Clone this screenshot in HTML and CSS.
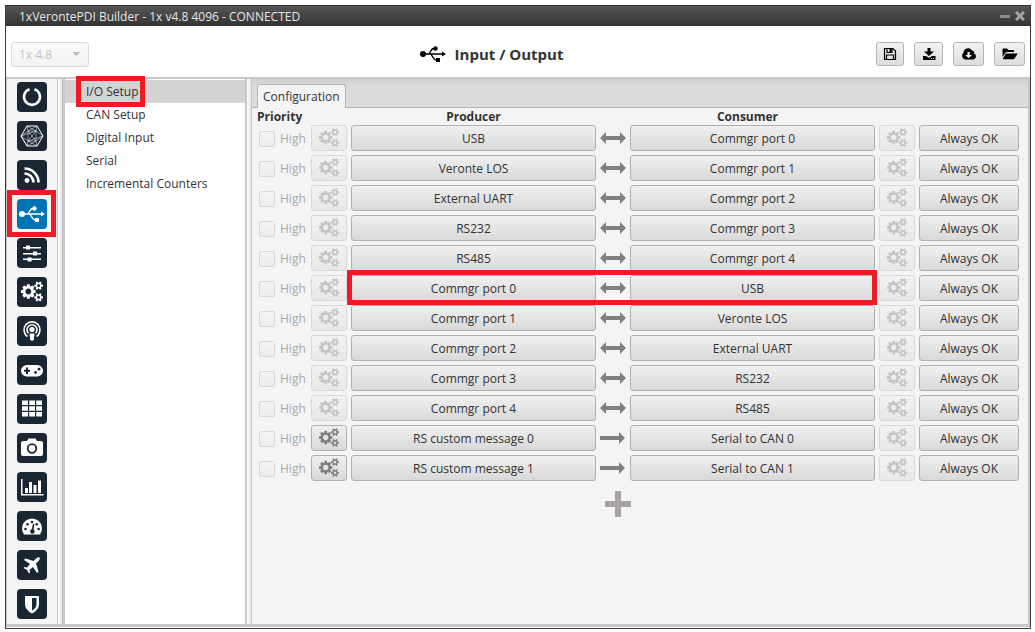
FILE: index.html
```html
<!DOCTYPE html>
<html lang="en">
<head>
  <meta charset="UTF-8" />
  <meta name="viewport" content="width=device-width, initial-scale=1.0"/>
  <title>1xVerontePDI Builder</title>
  <link rel="stylesheet" href="styles.css">
</head>
<body>
  <svg class="symbols" aria-hidden="true">
    <symbol id="usb" viewBox="0 0 26 18">
      <circle cx="3" cy="9" r="3"/>
      <path d="M3 9H23M8 9C11 9 10 3.500 14 3.500H17M10 9C13 9 12 15 17 15" fill="none" stroke="currentColor" stroke-width="1.300"/>
      <circle cx="15.500" cy="3.500" r="2.200"/>
      <path d="M22 6.500L26 9L22 11.500ZM16 13H20V17H16Z"/>
    </symbol>
    <symbol id="gears" viewBox="0 0 1920 1792">
      <path d="M896 896q0-106-75-181t-181-75-181 75-75 181 75 181 181 75 181-75 75-181zm384-91v185q0 10-7 19.500t-16 10.500l-155 24q-11 35-32 76 34 48 90 115 7 11 7 20 0 12-7 19-23 30-82.500 89.500t-78.500 59.500q-11 0-21-7l-115-90q-37 19-77 31-11 108-23 155-7 24-30 24h-186q-11 0-20-7.500t-10-17.500l-23-153q-34-10-75-31l-118 89q-7 7-20 7-11 0-21-8-144-133-144-160 0-9 7-19 10-14 41-53t47-61q-23-44-35-82l-152-24q-10-1-17-9.500t-7-19.500v-185q0-10 7-19.500t16-10.500l155-24q11-35 32-76-34-48-90-115-7-11-7-20 0-12 7-20 22-30 82-89t79-59q11 0 21 7l115 90q34-18 77-32 11-108 23-154 7-24 30-24h186q11 0 20 7.500t10 17.500l23 153q34 10 75 31l118-89q8-7 20-7 11 0 21 8 144 133 144 160 0 8-7 19-12 16-42 54t-45 60q23 48 34 82l152 23q10 2 17 10.500t7 19.500z"/>
      <path id="small-gear" d="M1664 1408q0-52-38-90t-90-38-90 38-38 90q0 53 37.500 90.500t90.500 37.500 90.500-37.500 37.500-90.500zm256-70v140q0 16-149 31-12 27-30 52 51 113 51 138 0 4-4 7-122 71-124 71-8 0-46-47t-52-68q-20 2-30 2t-30-2q-14 21-52 68t-46 47q-2 0-124-71-4-3-4-7 0-25 51-138-18-25-30-52-149-15-149-31v-140q0-16 149-31 13-29 30-52-51-113-51-138 0-4 4-7 4-2 35-20t59-34 30-16q8 0 46 46.500t52 67.500q20-2 30-2t30 2q51-71 92-112l6-2q4 0 124 70 4 3 4 7 0 25-51 138 17 23 30 52 149 15 149 31z"/>
      <use href="#small-gear" y="-1024"/>
    </symbol>
    <symbol id="both" viewBox="0 0 26 12">
      <path d="M0 6L6 0V4H20V0L26 6L20 12V8H6V12Z"/>
    </symbol>
    <symbol id="right" viewBox="0 0 26 12">
      <path d="M0 4H19V0L25 6L19 12V8H0Z"/>
    </symbol>
  </svg>

  <div class="window">
    <div class="titlebar">
      <span>1xVerontePDI Builder - 1x v4.8 4096 - CONNECTED</span>
      <div class="window-buttons">
        <button aria-label="Minimize"><svg width="10" height="10"><path d="M0 4H10V7H0Z"/></svg></button>
        <button aria-label="Close"><svg width="10" height="10"><path d="M1 1L9 9M9 1L1 9" stroke="#a5a5a5" stroke-width="3"/></svg></button>
      </div>
    </div>

    <header>
      <select aria-label="Version" disabled>
        <option>1x 4.8</option>
      </select>
      <h1><svg width="26" height="18"><use href="#usb"/></svg>Input / Output</h1>
      <div class="toolbar">
        <button aria-label="Save"><svg width="14" height="14" viewBox="0 0 14 14"><path d="M1.500 1.500H10L12.500 4V12.500H1.500ZM3.500 12V8H10.500V12M4 2V5.500H9V2" fill="none" stroke="#000" stroke-width="1.200"/><path d="M6.500 2H8.500V5H6.500Z"/></svg></button>
        <button class="mid" aria-label="Download"><svg width="14" height="14" viewBox="0 0 14 14"><path d="M5.500 1H8.500V4.500H12L7 9L2 4.500H5.500Z"/><path d="M1 9H4L7 11L10 9H13.500V13H1Z"/><path d="M9 11H10V12H9ZM11 11H12V12H11Z" fill="#eee"/></svg></button>
        <button class="wide" aria-label="Cloud download"><svg width="16" height="14" viewBox="0 0 16 14"><path d="M4 12.500A3.800 3.800 0 0 1 2.500 5.800A4.600 4.600 0 0 1 11 3.500A2.600 2.600 0 0 1 13.200 6.500A3.200 3.200 0 0 1 12.500 12.500Z"/><path d="M6.500 5H8.700V8H11L7.600 11.300L4.200 8H6.500Z" fill="#eee"/></svg></button>
        <button class="wide" aria-label="Open"><svg width="16" height="14" viewBox="0 0 16 14"><path d="M0.500 10V2.500Q0.500 1.500 1.500 1.500H5L6.500 3H11Q12 3 12 4V5H5.500Q4 5 3.200 6Z"/><path d="M4.500 6.500H15.800L12.500 11.500Q12 12.300 11 12.300H0.700L3.300 7.300Q3.700 6.500 4.500 6.500Z"/></svg></button>
      </div>
    </header>

    <main>
      <nav class="sidebar">
        <button aria-label="Status"><svg viewBox="0 0 30 30"><path d="M12.500 7.300A8 8 0 1 0 17.500 7.300" fill="none" stroke="#fff" stroke-width="2.600"/></svg></button>
        <button aria-label="Mesh"><svg viewBox="0 0 30 30"><g fill="none" stroke="#fff" stroke-width="0.500"><path d="M10 5H20L26 15L20 25H10L4 15Z" stroke-width="1"/><path d="M10 5L11 10L4 15L11 20L10 25M20 5L19 10L26 15L19 20L20 25M11 10L20 5M11 10H19V20H11ZM11 10L19 20M19 10L11 20M4 15L19 10M4 15L10 25L19 20M10 5L19 10M26 15L11 20L20 25"/></g></svg></button>
        <button aria-label="Telemetry"><svg viewBox="0 0 30 30"><circle cx="10" cy="20.500" r="2.400"/><path d="M7.500 13.500A9 9 0 0 1 16.500 22.500M7.500 8.500A14 14 0 0 1 21.500 22.500" fill="none" stroke="#fff" stroke-width="2.600"/></svg></button>
        <button class="active" aria-label="Input / Output"><svg viewBox="0 0 30 30"><use href="#usb" x="2" y="6" width="26" height="18"/></svg></button>
        <button aria-label="Control"><svg viewBox="0 0 30 30"><path d="M6 9H24V10.500H6ZM6 15H24V16.500H6ZM6 20.500H24V22H6ZM9 7.500H13V11.500H9ZM16 13.500H20V17.500H16ZM10.500 19.500H14.500V23.500H10.500Z"/></svg></button>
        <button aria-label="Automations"><svg viewBox="0 0 30 30"><use href="#gears" x="4" y="4" width="22" height="21"/></svg></button>
        <button aria-label="Communications"><svg viewBox="0 0 30 30"><g fill="none" stroke="#fff" stroke-width="1.600"><path d="M10.500 20.500A8 8 0 1 1 19.500 20.500"/><path d="M11.500 17.300A5 5 0 1 1 18.500 17.300"/></g><circle cx="15" cy="13.500" r="2.600"/><path d="M12.500 17.500H17.500L16.800 24Q15 25.500 13.200 24Z"/></svg></button>
        <button aria-label="Stick"><svg viewBox="0 0 30 30"><rect x="4" y="10" width="22" height="11.500" rx="5.750"/><path d="M9 12.500H11V14.700H13V16.700H11V19H9V16.700H7V14.700H9Z" fill="#1a2733"/><circle cx="18.500" cy="17.500" r="1.400" fill="#1a2733"/><circle cx="22" cy="14.200" r="1.400" fill="#1a2733"/></svg></button>
        <button aria-label="Variables"><svg viewBox="0 0 30 30"><path d="M5 6.500H11V11H5ZM12.200 6.500H18V11H12.200ZM19.200 6.500H25V11H19.200ZM5 12.300H11V16.700H5ZM12.200 12.300H18V16.700H12.200ZM19.200 12.300H25V16.700H19.200ZM5 18H11V22.500H5ZM12.200 18H18V22.500H12.200ZM19.200 18H25V22.500H19.200Z"/></svg></button>
        <button aria-label="Camera"><svg viewBox="0 0 30 30"><path d="M6 8H10L11.500 5.500H18.500L20 8H24Q26 8 26 10V21Q26 23 24 23H6Q4 23 4 21V10Q4 8 6 8Z"/><circle cx="15" cy="15.500" r="4.300" fill="none" stroke="#1a2733" stroke-width="1.800"/></svg></button>
        <button aria-label="Charts"><svg viewBox="0 0 30 30"><path d="M4 7H5.500V22H26.500V23.500H4ZM8 16H11V21H8ZM12 10H15V21H12ZM16.500 13H19.500V21H16.500ZM21 8.500H24V21H21Z"/></svg></button>
        <button aria-label="Gauges"><svg viewBox="0 0 30 30"><path d="M7 23.500A10 10 0 1 1 23 23.500Z"/><g fill="#1a2733"><circle cx="8.500" cy="18" r="1.300"/><circle cx="10.500" cy="13.300" r="1.300"/><circle cx="15" cy="11" r="1.300"/><circle cx="19.700" cy="13.300" r="1.300"/><circle cx="21.600" cy="18" r="1.300"/><path d="M16 12.800L17.300 13L16.600 18.500A2.300 2.300 0 1 1 14.700 18.300Z"/></g></svg></button>
        <button aria-label="Aircraft"><svg viewBox="0 0 30 30"><path d="M22.500 7.500Q21 6.500 18.500 9L16.500 11L8.500 8.500L7 10L13 14L10 17.500L7.500 17L6.500 18L10 20L12 23.500L13 22.500L12.500 20L16 17L20 23L21.500 21.500L19 13.500L21 11.500Q23.500 9 22.500 7.500Z"/></svg></button>
        <button aria-label="Safety"><svg viewBox="0 0 30 30"><path fill-rule="evenodd" d="M8 7H22V15Q22 21 15 24.500Q8 21 8 15ZM15 9V21.500Q19.500 19 19.500 15V9Z"/></svg></button>
      </nav>

      <div class="divider"></div>

      <ul class="menu">
        <li class="selected"><a href="#">I/O Setup</a></li>
        <li><a href="#">CAN Setup</a></li>
        <li><a href="#">Digital Input</a></li>
        <li><a href="#">Serial</a></li>
        <li><a href="#">Incremental Counters</a></li>
      </ul>

      <div class="divider"></div>

      <section class="content">
        <div class="tabs">
          <button class="tab">Configuration</button>
        </div>
        <div class="panel">
          <table>
            <colgroup>
              <col class="col-priority"><col class="col-gear"><col><col class="col-arrow"><col><col class="col-gear"><col class="col-status">
            </colgroup>
            <thead>
              <tr>
                <th class="priority">Priority</th>
                <th></th>
                <th>Producer</th>
                <th></th>
                <th class="consumer">Consumer</th>
                <th></th>
                <th></th>
              </tr>
            </thead>
            <tbody id="rows"></tbody>
          </table>
          <button class="add" aria-label="Add"><svg width="26" height="26"><path d="M10 0H16V10H26V16H16V26H10V16H0V10H10Z"/></svg></button>
        </div>
      </section>
    </main>
  </div>

  <script>
    const connections = [
      ["USB", "Commgr port 0"],
      ["Veronte LOS", "Commgr port 1"],
      ["External UART", "Commgr port 2"],
      ["RS232", "Commgr port 3"],
      ["RS485", "Commgr port 4"],
      ["Commgr port 0", "USB"],
      ["Commgr port 1", "Veronte LOS"],
      ["Commgr port 2", "External UART"],
      ["Commgr port 3", "RS232"],
      ["Commgr port 4", "RS485"],
      ["RS custom message 0", "Serial to CAN 0"],
      ["RS custom message 1", "Serial to CAN 1"]
    ];
    const highlighted = 5;
    const gears = `<svg width="20" height="19"><use href="#gears"/></svg>`;

    const tbody = document.getElementById("rows");
    connections.forEach(([producer, consumer], i) => {
      const custom = producer.startsWith("RS custom");
      const tr = document.createElement("tr");
      tr.innerHTML = `
        <td><label><input type="checkbox" disabled>High</label></td>
        <td><button class="gear" aria-label="Producer settings" ${custom ? "" : "disabled"}>${gears}</button></td>
        <td><button>${producer}</button></td>
        <td><svg class="arrow" width="26" height="12"><use href="#${custom ? "right" : "both"}"/></svg></td>
        <td><button>${consumer}</button></td>
        <td><button class="gear" aria-label="Consumer settings" disabled>${gears}</button></td>
        <td><button>Always OK</button>${i === highlighted ? '<span class="highlight"></span>' : ""}</td>
      `;
      tbody.appendChild(tr);
    });
  </script>
</body>
</html>
```
FILE: styles.css
```css
* {
  margin: 0;
  padding: 0;
  box-sizing: border-box;
}

body {
  font-family: "Open Sans", "Noto Sans", sans-serif;
  font-size: 12px;
  color: #333;
  background-color: #fff;
  height: 100vh;
  padding: 5px 4px 3px 5px;
}

button, select {
  font: inherit;
  color: inherit;
}

.symbols {
  position: absolute;
  width: 0;
  height: 0;
}

.window {
  height: 100%;
  display: flex;
  flex-direction: column;
  border: 1px solid #3c3c3c;
  border-top: none;
}

/* Title bar */
.titlebar {
  height: 21px;
  padding: 0 5px 0 13px;
  display: flex;
  justify-content: space-between;
  align-items: center;
  color: #e6e6e6;
  background: linear-gradient(#555, #333);
  border-top: 1px solid #333;
}

.window-buttons {
  display: flex;
  gap: 5px;
}

.window-buttons button {
  display: flex;
  border: none;
  background: none;
  fill: #8c8c8c;
}

/* Header */
header {
  height: 51px;
  padding: 5px 5px 0;
  display: flex;
  align-items: center;
}

header select {
  appearance: none;
  width: 78px;
  height: 25px;
  padding: 0 7px;
  color: #333;
  opacity: 0.3;
  border: 1px solid #888;
  border-radius: 3px;
  background: conic-gradient(from 315deg at 50% 100%, #222 90deg, transparent 0) right 8px center / 8px 4px no-repeat, linear-gradient(#f0f0f0, #d9d9d9);
}

h1 {
  flex: 1;
  padding-left: 18px;
  display: flex;
  justify-content: center;
  align-items: center;
  gap: 9px;
  font-size: 15px;
}

h1 svg {
  color: #000;
}

.toolbar {
  display: flex;
  gap: 10px;
}

.toolbar button {
  width: 28px;
  height: 24px;
  display: flex;
  align-items: center;
  justify-content: center;
  border: 1px solid #b4b4b4;
  border-radius: 3px;
  background: linear-gradient(#f2f2f2, #dcdcdc);
}

.toolbar .mid {
  width: 29px;
}

.toolbar .wide {
  width: 31px;
}

/* Body */
main {
  flex: 1;
  min-height: 0;
  display: flex;
  margin-bottom: 1px;
  border: solid #c8c8c8;
  border-width: 2px 2px 3px 1px;
}

.sidebar {
  width: 50px;
  padding: 3px 10px;
  display: flex;
  flex-direction: column;
  gap: 9px;
  background-color: #f4f4f4;
}

.sidebar button {
  flex: none;
  position: relative;
  width: 30px;
  height: 30px;
  border: none;
  border-radius: 4px;
  color: #fff;
  background-color: #1a2733;
}

.sidebar svg {
  display: block;
  fill: #fff;
}

.sidebar .active {
  background-color: #0073b5;
}

.sidebar .active::after {
  content: "";
  position: absolute;
  inset: -9px -9px -8px -10px;
  border: 5px solid #ed1c24;
}

.divider {
  width: 8px;
  border: solid #c8c8c8;
  border-width: 0 3px 0 1px;
  background: linear-gradient(to right, #fff, #e4e4e4);
}

.menu {
  width: 180px;
  padding-top: 1px;
  list-style: none;
  background-color: #fff;
}

.menu li {
  height: 23px;
  padding-left: 21px;
  line-height: 23px;
}

.menu a {
  color: inherit;
  text-decoration: none;
}

.menu .selected {
  background-color: #d3d3d3;
}

.menu .selected a {
  display: inline-block;
  height: 23px;
  margin-left: -6px;
  padding: 0 2px 0 6px;
  outline: 5px solid #ed1c24;
  outline-offset: -1px;
}

.menu + .divider {
  width: 7px;
  border-width: 0 1px 0 2px;
}

.content {
  flex: 1;
  min-width: 0;
  background-color: #f4f4f4;
}

.tabs {
  height: 29px;
  padding: 5px 5px 0;
  display: flex;
  background: linear-gradient(#cfcfcf, #dcdcdc 8px);
  border-bottom: 1px solid #b4b4b4;
}

.tab {
  height: 24px;
  padding: 0 5px;
  border: 1px solid #b4b4b4;
  border-bottom: none;
  border-radius: 3px 3px 0 0;
  background-color: #f4f4f4;
}

.panel {
  padding: 0 5px 0 1px;
}

/* Connections table */
table {
  width: 100%;
  table-layout: fixed;
  border-spacing: 4px;
}

.col-priority {
  width: 50px;
}

.col-gear {
  width: 36px;
}

.col-arrow {
  width: 26px;
}

.col-status {
  width: 100px;
}

th {
  height: 9px;
  line-height: 9px;
}

.priority {
  text-align: left;
}

.consumer {
  padding-right: 10px;
}

tbody tr {
  position: relative;
}

td {
  height: 26px;
}

td button {
  display: block;
  width: 100%;
  height: 26px;
  border: 1px solid #b0b0b0;
  border-radius: 3px;
  background: linear-gradient(#f0f0f0, #d9d9d9);
}

td label {
  display: flex;
  align-items: center;
  gap: 5px;
  padding: 1px 0 0 2px;
  color: #aaa;
}

input[type="checkbox"] {
  appearance: none;
  width: 16px;
  height: 16px;
  border: 1px solid #d8d8d8;
  border-radius: 2px;
  background: linear-gradient(#f4f4f4, #ececec);
}

.gear {
  display: flex;
  align-items: center;
  justify-content: center;
  padding-bottom: 2px;
  fill: #808080;
}

.gear:disabled {
  opacity: 0.4;
}

.arrow {
  display: block;
  fill: #808080;
}

.highlight {
  position: absolute;
  top: -5px;
  bottom: -4px;
  left: 90px;
  right: 142px;
  border: 5px solid #ed1c24;
}

.add {
  display: block;
  margin: 6px 0 0 calc(50% - 33px);
  border: none;
  background: none;
  fill: #aaa3a3;
}
```
